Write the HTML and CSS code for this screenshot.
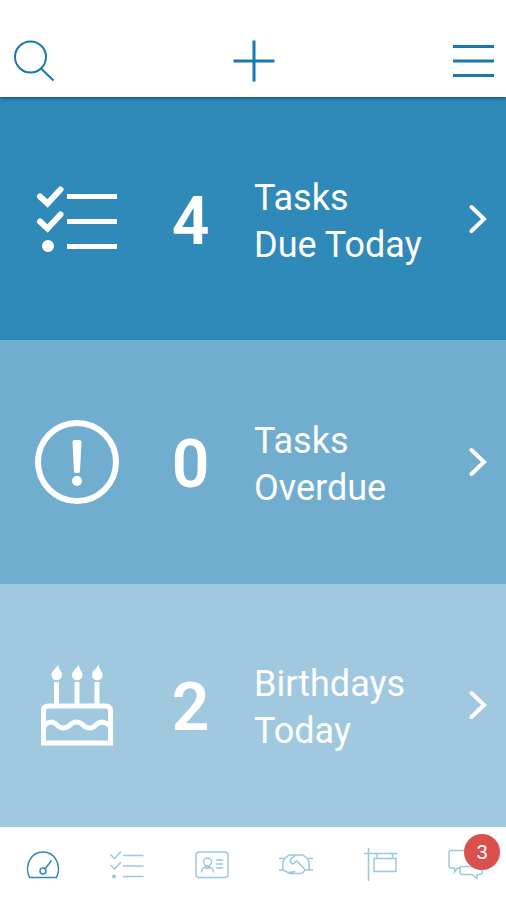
FILE: index.html
```html
<!DOCTYPE html>
<html lang="en">
<head>
<meta charset="utf-8">
<meta name="viewport" content="width=device-width, initial-scale=1">
<title>Dashboard</title>
<link rel="stylesheet" href="styles.css">
</head>
<body>
<header class="topbar">
  <button class="icon-button" type="button" aria-label="Search">
    <svg viewBox="0 0 42 42"><circle cx="17.500" cy="17" r="15.500"/><path d="M28 28.500 40.500 40.500"/></svg>
  </button>
  <button class="icon-button" type="button" aria-label="Add">
    <svg class="plus" viewBox="0 0 42 42"><path d="M21 .5v41M.5 21h41"/></svg>
  </button>
  <button class="icon-button" type="button" aria-label="Menu">
    <svg class="bars" viewBox="0 0 42 42"><path d="M1 6.500h41M1 21h41M1 35.500h41"/></svg>
  </button>
</header>

<main class="cards">
  <a class="card card-due" href="#due">
    <svg class="card-icon" viewBox="0 0 84 84"><path class="cake" d="M32 19.500h50M32 44.500h50M32 69.500h50"/><path class="thick" d="m5 19.500 7.500 7L25.500 12.500M5 44.500l7.500 7L25.500 37.500"/><circle class="solid" cx="13" cy="69" r="6"/></svg>
    <span class="count">4</span>
    <span class="label">Tasks<br>Due Today</span>
    <svg class="chevron" viewBox="0 0 18 30"><path d="M2.500 3 15 15 2.500 27"/></svg>
  </a>
  <a class="card card-overdue" href="#overdue">
    <svg class="card-icon" viewBox="0 0 84 84"><circle class="thick" cx="42" cy="42" r="39"/><path class="solid" d="M37.500 22q0-2 2-2h5q2 0 2 2L45 51q0 2-1.500 2h-3q-1.500 0-1.500-2Z"/><circle class="solid" cx="42" cy="61" r="5"/></svg>
    <span class="count">0</span>
    <span class="label">Tasks<br>Overdue</span>
    <svg class="chevron" viewBox="0 0 18 30"><path d="M2.500 3 15 15 2.500 27"/></svg>
  </a>
  <a class="card card-birthdays" href="#birthdays">
    <svg class="card-icon" viewBox="0 0 84 84"><path class="cake" d="M8.500 80V48q0-5 5-5h57q5 0 5 5v32ZM21.500 19v24M42 19v24M62 19v24M9 63c4-5 9-5 13-1s9 4 13 0 9-4 13 0 9 4 13 0 9-4 14 1"/><path class="solid" d="M23 1c-1 5-6.500 6-6.500 11 0 7 10.500 7 10.500 0C27 8 23 6 23 1ZM43.500 1c-1 5-6.500 6-6.500 11 0 7 10.500 7 10.500 0C47.500 8 43.500 6 43.500 1ZM63.500 1c-1 5-6.500 6-6.500 11 0 7 10.500 7 10.500 0C67.500 8 63.500 6 63.500 1Z"/></svg>
    <span class="count">2</span>
    <span class="label">Birthdays<br>Today</span>
    <svg class="chevron" viewBox="0 0 18 30"><path d="M2.500 3 15 15 2.500 27"/></svg>
  </a>
</main>

<nav class="tabs" aria-label="Sections">
  <button class="tab tab-active" type="button" aria-label="Dashboard">
    <svg viewBox="0 0 34 34"><path d="M3.500 30.500C-2 18 5 5 17 5S36 18 30.500 30.500ZM19 22 25.500 13.500"/><circle cx="17" cy="24" r="3"/></svg>
  </button>
  <button class="tab" type="button" aria-label="Tasks">
    <svg viewBox="0 0 34 34"><path d="M13 8.500h20.500M13 19h20.500M13 29.500h20.500M.5 7.500l4 4L11 4.500M.5 18l4 4L11 15"/><circle class="dot" cx="4" cy="29.500" r="2"/></svg>
  </button>
  <button class="tab" type="button" aria-label="Contacts">
    <svg viewBox="0 0 34 34"><rect x="1" y="5" width="32" height="25.500" rx="3"/><circle cx="12.500" cy="15" r="4"/><path d="M6.500 25.500c0-8 12-8 12 0M9 20.500l3.500 1 3.500-1M21 13h7M21 17h7M21 21h7"/></svg>
  </button>
  <button class="tab" type="button" aria-label="Deals">
    <svg viewBox="0 0 34 34"><path d="M0 11.500h5.500L10 8h14l4.500 3.500H34M0 23h4.500l6 3.500h11q3-.5 4.500-3.500h8M5.500 11.500Q2.500 17 4.500 23M28.500 11.500q3 5.500 1 11.500M16.500 8l-5 4.500q-1 3 2.500 4.500l4-3 8.500 9M10 25q4 1 6-1"/></svg>
  </button>
  <button class="tab" type="button" aria-label="Listings">
    <svg viewBox="0 0 34 34"><path d="M4.500 1v33M0 6.500h33.500M13 6.500v4M28.500 6.500v4M10 11.500h22v13H10Z"/></svg>
  </button>
  <button class="tab" type="button" aria-label="Messages, 3 unread">
    <svg viewBox="0 0 34 34"><path d="M12 21H9.500L6.500 25v-4H3Q1 21 1 19V5.500Q1 3.500 3 3.500h18q2 0 2 2v13M14 19.500h18q2 0 2 2v4q0 2-2 2h-3v4l-5-4H14q-2 0-2-2v-4q0-2 2-2Z"/></svg>
    <span class="badge">3</span>
  </button>
</nav>
</body>
</html>
```
FILE: styles.css
```css
* {
  box-sizing: border-box;
}

body {
  margin: 0;
  min-height: 100vh;
  display: flex;
  flex-direction: column;
  background: #fff;
  font-family: Roboto, "Liberation Sans", sans-serif;
}

button {
  padding: 0;
  border: 0;
  background: none;
  cursor: pointer;
}

svg {
  display: block;
  fill: none;
  stroke: currentColor;
}

.topbar {
  position: relative;
  display: flex;
  justify-content: space-between;
  padding: 40px 12px 15px 13px;
  color: #1779ae;
  background: #fff;
  box-shadow: 0 1px 4px rgba(0, 40, 70, 0.7);
}

.icon-button {
  width: 42px;
  height: 42px;
  color: inherit;
}

.icon-button svg {
  width: 100%;
  stroke-width: 2;
}

.icon-button .plus,
.icon-button .bars {
  stroke-width: 3;
}

.cards {
  flex: 1;
  display: grid;
  grid-auto-rows: 1fr;
}

.card {
  display: grid;
  grid-template-columns: 84px 135px 1fr 18px;
  align-items: center;
  padding: 0 19px 0 35px;
  color: #fff;
  text-decoration: none;
}

.card-due {
  background: #2f89b9;
}

.card-overdue {
  background: #71adcf;
}

.card-birthdays {
  background: #a0c9df;
}

.card-icon {
  width: 84px;
  height: 84px;
}

.thick {
  stroke-width: 6;
  stroke-linecap: round;
}

.cake {
  stroke-width: 5;
}

.solid {
  fill: currentColor;
  stroke: none;
}

.count,
.label {
  padding-top: 6px;
}

.count {
  padding-left: 8px;
  font-size: 66px;
  font-weight: 600;
  line-height: 74px;
  text-align: center;
}

.label {
  font-size: 36px;
  line-height: 47px;
}

.chevron {
  width: 18px;
  height: 30px;
  stroke-width: 4;
  stroke-linecap: round;
}

.tabs {
  display: flex;
  justify-content: space-between;
  padding: 20px 24px 19px 26px;
}

.tab {
  position: relative;
  width: 34px;
  height: 34px;
  color: #9cc8df;
}

.tab-active {
  color: #2f89b9;
}

.tab svg {
  width: 100%;
  stroke-width: 1.5;
  overflow: visible;
}

.tab .dot {
  fill: currentColor;
  stroke: none;
}

.badge {
  position: absolute;
  top: -13px;
  right: -18px;
  width: 36px;
  height: 36px;
  border-radius: 50%;
  background: #d9504d;
  color: #fff;
  font-size: 20px;
  line-height: 36px;
  text-align: center;
}
```
